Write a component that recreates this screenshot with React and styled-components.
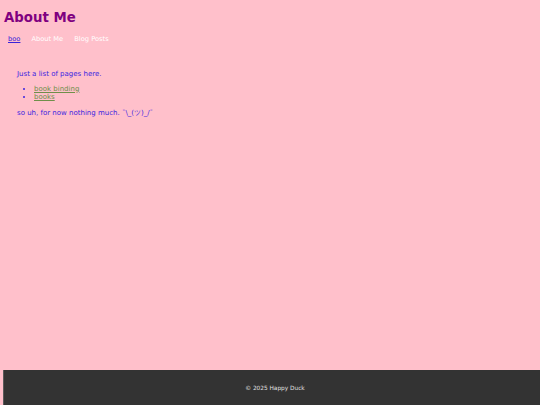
import React from "react";
import styled, { createGlobalStyle } from "styled-components";

const Global = createGlobalStyle`
  html, body { margin: 0; padding: 0; background: #ffc0cb; }
  body { font-family: "DejaVu Sans", Verdana, sans-serif; }
`;

const Page = styled.div`
  min-height: 100vh;
  display: flex;
  flex-direction: column;
`;

const Header = styled.header`
  padding: 9px 0 0 4px;
`;

const Title = styled.h1`
  margin: 0;
  font-size: 13.3px;
  line-height: 17px;
  font-weight: bold;
  color: #800080;
`;

const Nav = styled.nav`
  display: flex;
  gap: 11px;
  margin: 8px 0 0 4px;
  font-size: 6.7px;
  line-height: 10px;
`;

const NavLink = styled.a`
  color: ${(p) => (p.$active ? "#3a24d8" : "#ffffff")};
  text-decoration: ${(p) => (p.$active ? "underline" : "none")};
`;

const Main = styled.main`
  padding: 26px 0 0 17px;
  font-size: 7px;
  line-height: 8.5px;
  color: #3a24e0;
`;

const P = styled.p`
  margin: 0;
`;

const List = styled.ul`
  margin: 6px 0 8px 0;
  padding-left: 17px;
`;

const Item = styled.li`
  line-height: 8px;
`;

const Link = styled.a`
  color: #6f8f4a;
  text-decoration: underline;
`;

const Footer = styled.footer`
  margin-top: auto;
  margin-left: 3px;
  height: 35px;
  border-left: 1px solid #5a5a5a;
  background: #333333;
  display: flex;
  align-items: center;
  justify-content: center;
  padding-left: 6px;
  color: #e0e0e0;
  font-size: 5.8px;
`;

export default function App() {
  return (
    <Page>
      <Global />
      <Header>
        <Title>About Me</Title>
        <Nav>
          <NavLink $active href="#">boo</NavLink>
          <NavLink href="#">About Me</NavLink>
          <NavLink href="#">Blog Posts</NavLink>
        </Nav>
      </Header>
      <Main>
        <P>Just a list of pages here.</P>
        <List>
          <Item><Link href="#">book binding</Link></Item>
          <Item><Link href="#">books</Link></Item>
        </List>
        <P>so uh, for now nothing much. ¯\_(ツ)_/¯</P>
      </Main>
      <Footer>© 2025 Happy Duck</Footer>
    </Page>
  );
}
